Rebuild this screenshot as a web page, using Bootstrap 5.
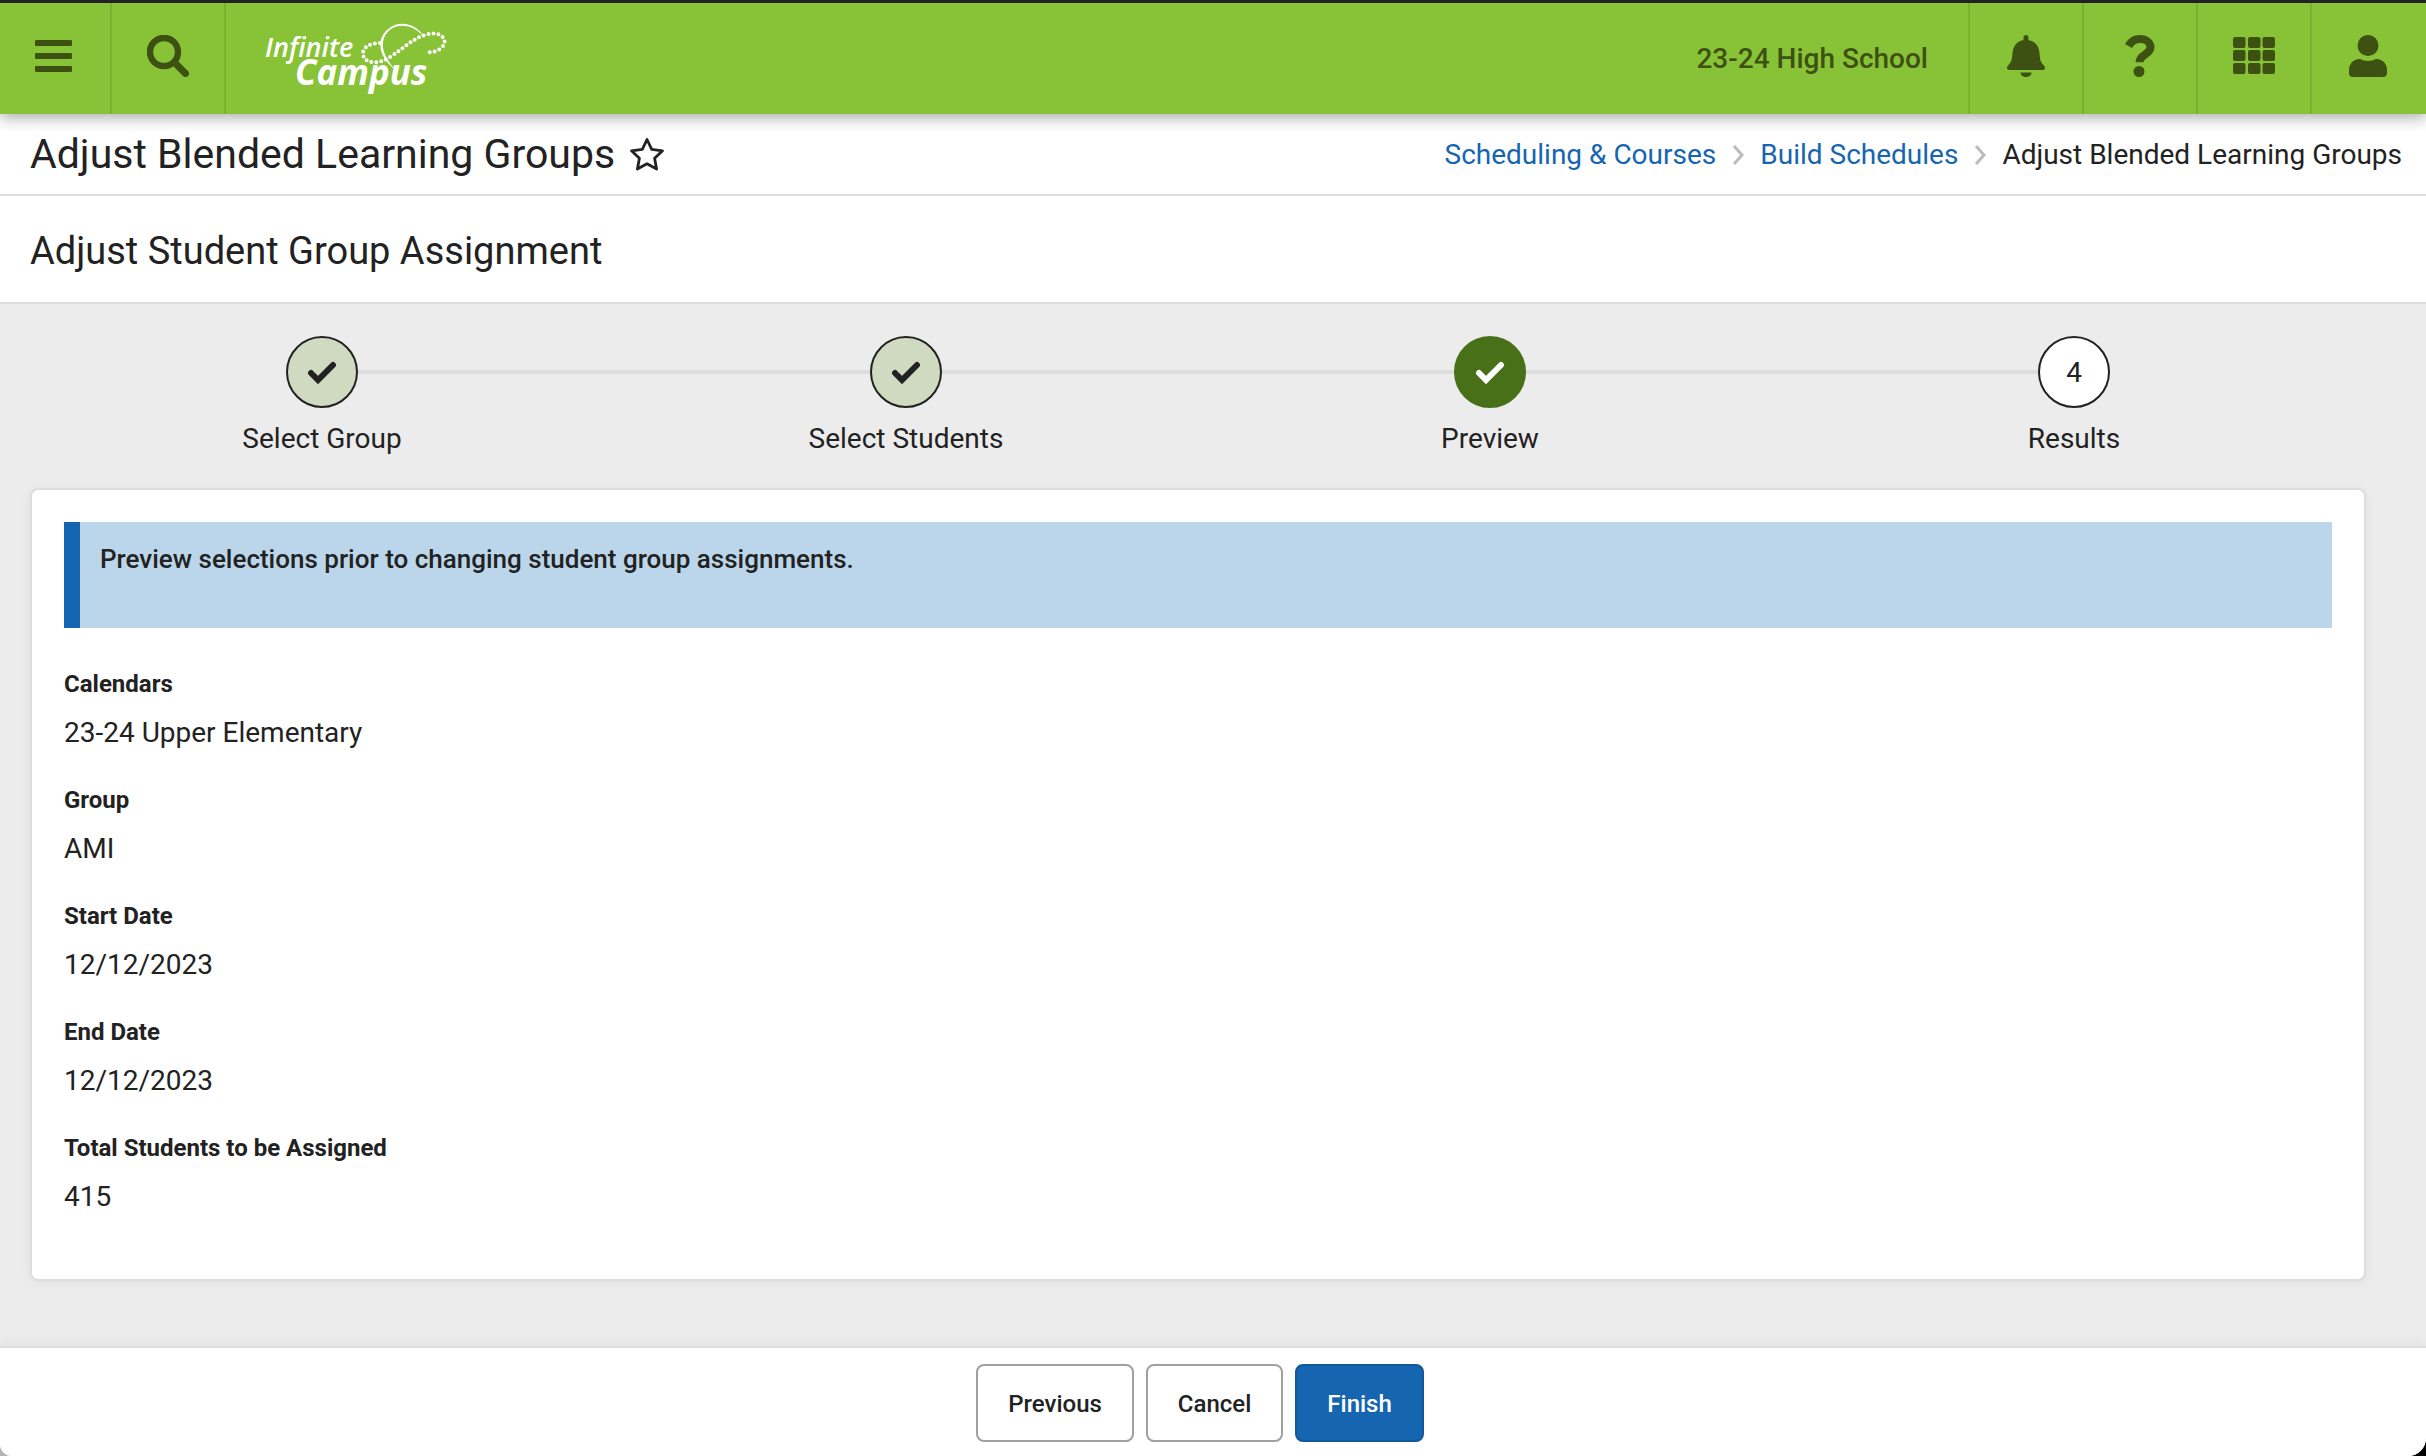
<!DOCTYPE html>
<html lang="en">
<head>
<meta charset="utf-8">
<meta name="viewport" content="width=device-width, initial-scale=1">
<title>Adjust Blended Learning Groups</title>
<link href="https://cdn.jsdelivr.net/npm/bootstrap@5.3.0/dist/css/bootstrap.min.css" rel="stylesheet">
<style>
  body { font-family: Roboto, "Liberation Sans", sans-serif; font-size: 28px; line-height: 32px; color: #222; background: linear-gradient(90deg, #b4b4b4 50%, #000 50%); }
  .app-shell { background: #ececec; border-top: 3px solid #222; border-radius: 0 0 18px 12px; overflow: hidden; }
  .app-header { height: 111px; background: #88c337; box-shadow: 0 4px 14px rgba(0,0,0,.32); z-index: 2; padding-right: 2px; }
  .bar-btn { width: 114px; border: 0; background: none; color: #3d5112; padding: 0 0 6px; }
  .bar-start .bar-btn { border-right: 2px solid #7bb032; }
  .bar-start .bar-btn:first-child { width: 112px; padding-right: 2px; }
  .bar-end .bar-btn { border-left: 2px solid #7bb032; }
  .brand-link { margin-left: 36px; }
  .calendar-name { color: #3d5112; font-weight: 500; margin-right: 40px; }
  .page-bar { background: #fff; border-bottom: 2px solid #ddd; padding: 0 24px 0 30px; }
  .title-bar { height: 82px; }
  .subtitle-bar { height: 108px; padding-top: 4px; }
  .page-title { font-size: 41px; line-height: 48px; font-weight: 400; }
  .page-subtitle { font-size: 38px; line-height: 44px; font-weight: 400; }
  .star-btn { border: 0; background: none; padding: 0; color: #222; margin-left: 14px; }
  .crumbs { gap: 16px; padding-top: 2px; }
  .crumbs a { color: #1665b0; text-decoration: none; }
  .content-area { padding: 32px 60px 64px 30px; }
  .step-item { flex: 1 1 0; }
  .step-row::before, .step-row::after { content: ""; flex: 1; height: 4px; background: #ddd; }
  .step-item:first-child .step-row::before, .step-item:last-child .step-row::after { background: transparent; }
  .step-dot { width: 72px; height: 72px; padding-top: 2px; border: 2px solid #222; border-radius: 50%; background: #fff; }
  .step-done .step-dot { background: #cfdac0; }
  .step-current .step-dot { background: #487018; border-color: #487018; color: #fff; }
  .step-label { margin-top: 15px; }
  .panel { margin-top: 33px; padding: 32px 32px 66px; border: 2px solid #ddd; border-radius: 8px; box-shadow: 0 2px 12px rgba(0,0,0,.05); background: #fff; }
  .notice { min-height: 106px; border-left: 16px solid #1665b0; background: #bbd6ea; padding: 21px 20px; font-size: 26px; font-weight: 500; }
  .facts { margin: 40px 0 0; }
  .facts dt { font-size: 24px; font-weight: 700; line-height: 32px; margin-bottom: 17px; }
  .facts dd { margin: 0 0 35px; line-height: 32px; }
  .facts dd:last-child { margin-bottom: 0; }
  .action-bar { background: #fff; border-top: 2px solid #ddd; padding: 16px 26px 14px 0; gap: 12px; box-shadow: 0 -2px 12px rgba(0,0,0,.05); }
  .action-btn { height: 78px; padding: 2px 30px 0; border: 2px solid #a0a0a0; border-radius: 8px; font-size: 24px; font-weight: 500; color: #222; background: #fff; }
  .action-main { background: #1665b0; border-color: #12589c; color: #fff; }
</style>
</head>
<body>
<div class="app-shell min-vh-100 d-flex flex-column">
  <header class="app-header d-flex justify-content-between position-relative">
    <div class="bar-start d-flex align-items-stretch">
      <button class="bar-btn d-flex align-items-center justify-content-center" type="button" aria-label="Menu">
        <svg width="38" height="34" viewBox="0 0 38 34" fill="currentColor"><rect width="37" height="6" rx="1" y="1"/><rect width="37" height="6" rx="1" y="14"/><rect width="37" height="6" rx="1" y="27"/></svg>
      </button>
      <button class="bar-btn d-flex align-items-center justify-content-center" type="button" aria-label="Search">
        <svg width="42" height="42" viewBox="0 0 42 42" fill="none" stroke="currentColor"><circle cx="17" cy="17" r="14" stroke-width="6.4"/><path d="M30 30l8.500 8.500" stroke-width="7" stroke-linecap="round"/></svg>
      </button>
      <a class="brand-link align-self-center" href="#" aria-label="Infinite Campus">
        <svg class="d-block" width="190" height="80" viewBox="262 19 190 80" fill="#fff">
          <text x="265" y="57" font-family="Open Sans, sans-serif" font-style="italic" font-weight="600" font-size="27">Infinite</text>
          <text x="295" y="85" font-family="Open Sans, sans-serif" font-style="italic" font-weight="700" font-size="35">Campus</text>
          <path d="M424 37C418 25 402 20 391 27C377 35 375 55 396 70C380 54 379 38 391 29C402 22 416 27 424 37Z"/>
          <path d="M380 43C369 43 362 48 363 55C366 65 380 64 390 57C404 48 413 38 428 34C441 31 448 40 443 46C439 51 432 53 426 52" fill="none" stroke="#fff" stroke-width="4" stroke-linecap="round" stroke-dasharray="0 5"/>
        </svg>
      </a>
    </div>
    <div class="bar-end d-flex align-items-stretch">
      <span class="calendar-name align-self-center">23-24 High School</span>
      <button class="bar-btn d-flex align-items-center justify-content-center" type="button" aria-label="Notifications">
        <svg width="38" height="42" viewBox="0 0 38 42" fill="currentColor"><path d="M19 0c1.500 0 2.500 1 2.500 2.500V5C29 6.500 32 12 32.500 18c.4 6 1 9 4 12 3 3 1 5-1 5h-33c-2 0-4-2-1-5 3-3 3.600-6 4-12C6 12 9 6.500 16.500 5V2.500C16.500 1 17.500 0 19 0zM13.500 37.500h11c0 6-11 6-11 0z"/></svg>
      </button>
      <button class="bar-btn d-flex align-items-center justify-content-center" type="button" aria-label="Help">
        <svg width="30" height="42" viewBox="0 0 30 42" fill="none" stroke="currentColor"><path d="M3.500 11C6 6.500 10 4 15 4c5.500 0 10.500 3 10.500 8.300 0 7.500-11 6.500-11 15" stroke-width="8"/><circle cx="14" cy="36.500" r="5.500" fill="currentColor" stroke="none"/></svg>
      </button>
      <button class="bar-btn d-flex align-items-center justify-content-center" type="button" aria-label="Apps">
        <svg width="42" height="38" viewBox="0 0 42 38" fill="currentColor"><rect width="12.500" height="11" rx="2"/><rect x="15" width="12.500" height="11" rx="2"/><rect x="29.500" width="12.500" height="11" rx="2"/><rect y="13" width="12.500" height="11" rx="2"/><rect x="15" y="13" width="12.500" height="11" rx="2"/><rect x="29.500" y="13" width="12.500" height="11" rx="2"/><rect y="26" width="12.500" height="11" rx="2"/><rect x="15" y="26" width="12.500" height="11" rx="2"/><rect x="29.500" y="26" width="12.500" height="11" rx="2"/></svg>
      </button>
      <button class="bar-btn d-flex align-items-center justify-content-center" type="button" aria-label="Account">
        <svg width="38" height="42" viewBox="0 0 38 42" fill="currentColor"><circle cx="19" cy="10.500" r="10.500"/><path d="M11 24c5 2.500 11 2.500 16 0 7 0 11 5 11 11v3c0 2.500-1.500 4-4 4H4c-2.500 0-4-1.500-4-4v-3c0-6 4-11 11-11z"/></svg>
      </button>
    </div>
  </header>

  <div class="page-bar title-bar d-flex align-items-center justify-content-between">
    <div class="d-flex align-items-center">
      <h1 class="page-title mb-0">Adjust Blended Learning Groups</h1>
      <button class="star-btn" type="button" aria-label="Add to favourites">
        <svg class="d-block" width="36" height="34" viewBox="0 0 36 34" fill="none" stroke="currentColor" stroke-width="2.800" stroke-linejoin="round"><path d="M18 2.500l4.700 9.800 10.800 1.500-7.900 7.500 2 10.700-9.600-5.200-9.600 5.200 2-10.700-7.900-7.500 10.800-1.500z"/></svg>
      </button>
    </div>
    <nav class="crumbs d-flex align-items-center" aria-label="Breadcrumb">
      <a href="#">Scheduling &amp; Courses</a>
      <svg width="12" height="20" viewBox="0 0 12 20" fill="none" stroke="#bbb" stroke-width="3"><path d="M2 1l8 9-8 9"/></svg>
      <a href="#">Build Schedules</a>
      <svg width="12" height="20" viewBox="0 0 12 20" fill="none" stroke="#bbb" stroke-width="3"><path d="M2 1l8 9-8 9"/></svg>
      <span aria-current="page">Adjust Blended Learning Groups</span>
    </nav>
  </div>
  <div class="page-bar subtitle-bar d-flex align-items-center">
    <h2 class="page-subtitle mb-0">Adjust Student Group Assignment</h2>
  </div>

  <main class="content-area flex-grow-1">
    <ol class="list-unstyled d-flex mb-0 text-center">
      <li class="step-item step-done">
        <div class="step-row d-flex align-items-center"><span class="step-dot d-flex align-items-center justify-content-center"><svg width="30" height="24" viewBox="0 0 30 24" fill="none" stroke="currentColor" stroke-width="6"><path d="M4 12l7 7L26 4" stroke-linecap="round"/></svg></span></div>
        <div class="step-label">Select Group</div>
      </li>
      <li class="step-item step-done">
        <div class="step-row d-flex align-items-center"><span class="step-dot d-flex align-items-center justify-content-center"><svg width="30" height="24" viewBox="0 0 30 24" fill="none" stroke="currentColor" stroke-width="6"><path d="M4 12l7 7L26 4" stroke-linecap="round"/></svg></span></div>
        <div class="step-label">Select Students</div>
      </li>
      <li class="step-item step-current" aria-current="step">
        <div class="step-row d-flex align-items-center"><span class="step-dot d-flex align-items-center justify-content-center"><svg width="30" height="24" viewBox="0 0 30 24" fill="none" stroke="currentColor" stroke-width="6"><path d="M4 12l7 7L26 4" stroke-linecap="round"/></svg></span></div>
        <div class="step-label">Preview</div>
      </li>
      <li class="step-item">
        <div class="step-row d-flex align-items-center"><span class="step-dot d-flex align-items-center justify-content-center">4</span></div>
        <div class="step-label">Results</div>
      </li>
    </ol>

    <section class="panel">
      <div class="notice">Preview selections prior to changing student group assignments.</div>
      <dl class="facts">
        <dt>Calendars</dt><dd>23-24 Upper Elementary</dd>
        <dt>Group</dt><dd>AMI</dd>
        <dt>Start Date</dt><dd>12/12/2023</dd>
        <dt>End Date</dt><dd>12/12/2023</dd>
        <dt>Total Students to be Assigned</dt><dd>415</dd>
      </dl>
    </section>
  </main>

  <footer class="action-bar d-flex justify-content-center">
    <button class="action-btn" type="button">Previous</button>
    <button class="action-btn" type="button">Cancel</button>
    <button class="action-btn action-main" type="button">Finish</button>
  </footer>
</div>
<script src="https://cdn.jsdelivr.net/npm/bootstrap@5.3.0/dist/js/bootstrap.bundle.min.js"></script>
</body>
</html>
